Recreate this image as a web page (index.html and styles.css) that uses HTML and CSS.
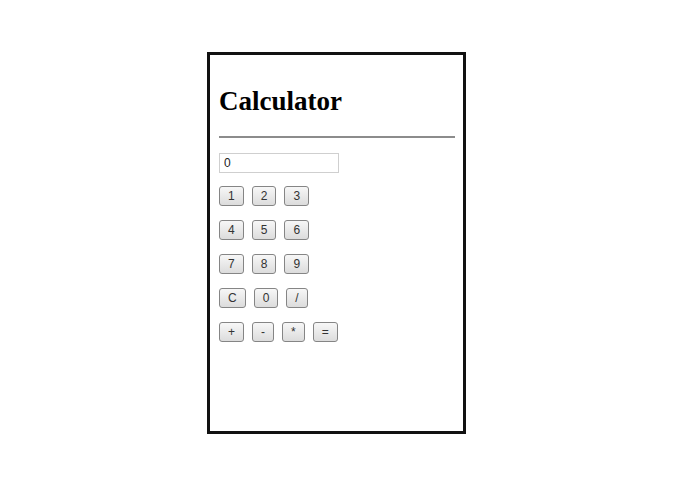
FILE: index.html
```html
<!DOCTYPE html>
<html lang="en">
<head>
  <meta charset="UTF-8" />
  <title>Calculator</title>
  <link rel="stylesheet" href="styles.css">
</head>
<body>
  <div class="calculator">
    <h1>Calculator</h1>
    <hr>
    <input class="display" type="text" value="0" readonly>

    <div class="keys">
      <div class="row">
        <button>1</button>
        <button>2</button>
        <button>3</button>
      </div>
      <div class="row">
        <button>4</button>
        <button>5</button>
        <button>6</button>
      </div>
      <div class="row">
        <button>7</button>
        <button>8</button>
        <button>9</button>
      </div>
      <div class="row">
        <button>C</button>
        <button>0</button>
        <button>/</button>
      </div>
      <div class="row">
        <button>+</button>
        <button>-</button>
        <button>*</button>
        <button>=</button>
      </div>
    </div>
  </div>
</body>
</html>
```

FILE: styles.css
```css
body {
  margin: 0;
  background-color: #fff;
  font-family: "Liberation Serif", "Times New Roman", serif;
}
.calculator {
  box-sizing: border-box;
  width: 259px;
  height: 382px;
  margin: 52px 0 0 207px;
  padding: 0 8px 0 9px;
  border: 3px solid #111;
}
.calculator h1 {
  margin: 30px 0 19px;
  font-size: 27px;
  line-height: 32px;
  font-weight: bold;
  color: #000;
}
.calculator hr {
  margin: 0;
  border: 0;
  border-top: 2px solid #8c8c8c;
}
.display {
  box-sizing: border-box;
  display: block;
  width: 120px;
  height: 20px;
  margin: 15px 0 0;
  padding: 0 4px;
  border: 1px solid #cfcfcf;
  font-family: "Liberation Sans", Arial, sans-serif;
  font-size: 12px;
  color: #222;
}
.keys {
  display: flex;
  flex-direction: column;
  gap: 14px;
  margin-top: 13px;
}
.row {
  display: flex;
  gap: 8px;
}
.row button {
  height: 20px;
  padding: 0 8px;
  border: 1px solid #858585;
  border-radius: 3px;
  background: linear-gradient(#f7f7f7, #dcdcdc);
  font-family: "Liberation Sans", Arial, sans-serif;
  font-size: 12px;
  color: #333;
}
```
